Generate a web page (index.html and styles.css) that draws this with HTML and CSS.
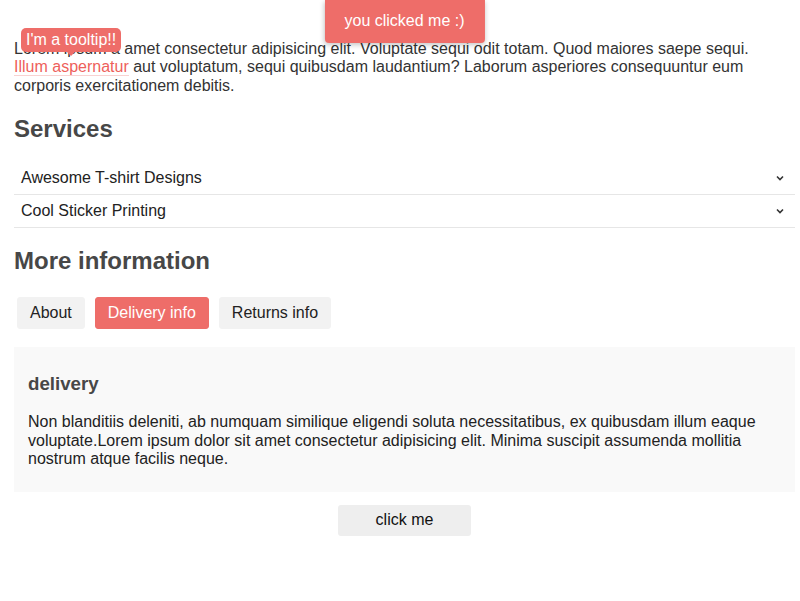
FILE: index.html
```html
<!DOCTYPE html>
<html lang="en">
<head>
<meta charset="utf-8">
<title>Services</title>
<link rel="stylesheet" href="styles.css">
</head>
<body>
<main class="page">
  <div class="toast">you clicked me :)</div>

  <p class="intro"><span class="tip-anchor">Lorem ipsum a<span class="tooltip">I'm a tooltip!!</span></span> amet consectetur adipisicing elit. Voluptate sequi odit totam. Quod maiores saepe sequi. <a class="link" href="#">Illum aspernatur</a> aut voluptatum, sequi quibusdam laudantium? Laborum asperiores consequuntur eum corporis exercitationem debitis.</p>

  <h2 class="heading">Services</h2>
  <div class="accordion">
    <div class="acc-row">
      <span>Awesome T-shirt Designs</span>
      <svg class="chev" width="8" height="6" viewBox="0 0 8 6"><path d="M1 1.5 L4 4.5 L7 1.5" fill="none" stroke="#333" stroke-width="1.6"/></svg>
    </div>
    <div class="acc-row">
      <span>Cool Sticker Printing</span>
      <svg class="chev" width="8" height="6" viewBox="0 0 8 6"><path d="M1 1.5 L4 4.5 L7 1.5" fill="none" stroke="#333" stroke-width="1.6"/></svg>
    </div>
  </div>

  <h2 class="heading">More information</h2>
  <div class="tabs">
    <button class="tab">About</button>
    <button class="tab active">Delivery info</button>
    <button class="tab">Returns info</button>
  </div>
  <section class="panel">
    <h3 class="panel-title">delivery</h3>
    <p class="panel-text">Non blanditiis deleniti, ab numquam similique eligendi soluta necessitatibus, ex quibusdam illum eaque voluptate.Lorem ipsum dolor sit amet consectetur adipisicing elit. Minima suscipit assumenda mollitia nostrum atque facilis neque.</p>
  </section>

  <div class="actions">
    <button class="click-btn">click me</button>
  </div>
</main>
</body>
</html>
```
FILE: styles.css
```css
html, body {
  margin: 0;
  padding: 0;
  background: #fff;
}
body {
  font-family: "Liberation Sans", Arial, sans-serif;
  font-size: 16px;
  color: #333;
}
.page {
  position: relative;
  padding: 40px 5px 40px 14px;
}
.toast {
  position: absolute;
  top: 0;
  left: calc(50% + 4.5px);
  transform: translateX(-50%);
  background: #ee6d69;
  color: #fff;
  padding: 12px 20px 13px;
  line-height: 18px;
  border-radius: 0 0 4px 4px;
  box-shadow: 0 2px 5px rgba(0, 0, 0, 0.22);
  white-space: nowrap;
  z-index: 5;
}
.intro {
  margin: 0 12px 0 0;
  line-height: 18.4px;
}
.tip-anchor {
  position: relative;
}
.tooltip {
  position: absolute;
  left: 7px;
  top: -12px;
  background: #ee6d69;
  color: #fff;
  padding: 3px 5px;
  line-height: 18px;
  border-radius: 5px;
  white-space: nowrap;
}
.tooltip::after {
  content: "";
  position: absolute;
  left: 50%;
  top: 100%;
  margin-left: -4px;
  border: 4px solid transparent;
  border-top-color: #ee6d69;
  border-bottom: 0;
}
.link {
  color: #ee5f5b;
  text-decoration: none;
  border-bottom: 1px solid #f8d3d2;
}
.heading {
  font-size: 24px;
  font-weight: bold;
  color: #474747;
  margin: 19.5px 0;
  line-height: 27.6px;
}
.accordion {
  display: flex;
  flex-direction: column;
}
.acc-row {
  display: flex;
  align-items: center;
  justify-content: space-between;
  padding: 7px 11px 7px 7px;
  line-height: 18px;
  border-bottom: 1px solid #e6e6e6;
  color: #222;
}
.chev {
  display: block;
}
.tabs {
  display: flex;
  gap: 10px;
  padding: 3px 3px 2px;
}
.tab {
  font-family: "Liberation Sans", Arial, sans-serif;
  font-size: 16px;
  line-height: 18px;
  height: 32px;
  padding: 0 12px;
  border: 1px solid #f2f2f2;
  background: #f2f2f2;
  color: #222;
  border-radius: 3px;
}
.tab.active {
  background: #ee6d69;
  border-color: #ee6d69;
  color: #fff;
}
.panel {
  margin-top: 16px;
  background: #f9f9f9;
  padding: 7px 14px;
}
.panel-title {
  font-size: 18.72px;
  font-weight: bold;
  color: #474747;
  margin: 18.72px 0;
  line-height: 21.5px;
}
.panel-text {
  margin: 16px 0;
  line-height: 18.4px;
  color: #222;
}
.actions {
  display: flex;
  justify-content: center;
  padding-top: 13px;
}
.click-btn {
  font-family: "Liberation Sans", Arial, sans-serif;
  font-size: 16px;
  width: 133px;
  height: 31px;
  border: 0;
  border-radius: 3px;
  background: #eeeeee;
  color: #111;
}
```
